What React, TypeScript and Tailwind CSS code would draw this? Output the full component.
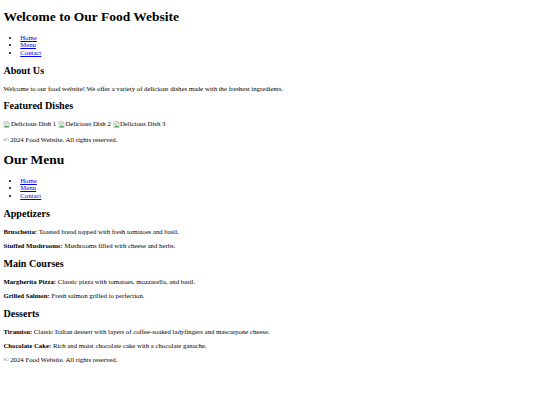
import React from "react";

function BrokenImg({ alt }: { alt: string }) {
  return (
    <span className="inline-flex items-baseline">
      <svg width="7" height="7" viewBox="0 0 16 16" className="mr-[0.5px] self-center">
        <path d="M2 1h8l4 4v10H2z" fill="#f2f2f2" stroke="#9a9a9a" strokeWidth="1" />
        <path d="M10 1v4h4" fill="none" stroke="#9a9a9a" strokeWidth="1" />
        <path d="M3 14l4-5 3 3 2-2 2 4z" fill="#4caf50" />
        <circle cx="6" cy="6" r="1.5" fill="#64a0dc" />
      </svg>
      <span>{alt}</span>
    </span>
  );
}

function Nav() {
  return (
    <ul className="my-[6.75px] list-disc pl-[16.875px] text-[6.75px] leading-[7.5px]">
      <li>
        <a href="#" className="text-[#0000ee] underline">Home</a>
      </li>
      <li>
        <a href="#" className="text-[#0000ee] underline">Menu</a>
      </li>
      <li>
        <a href="#" className="text-[#0000ee] underline">Contact</a>
      </li>
    </ul>
  );
}

const h1 = "my-[9.045px] text-[13.5px] font-bold leading-[15.6px]";
const h2 = "my-[8.4px] text-[10.125px] font-bold leading-[11.6px]";
const p = "my-[6.75px] text-[6.75px] leading-[7.5px]";

export default function App() {
  return (
    <div className="flow-root min-h-[405px] bg-white px-[3.375px] font-['Liberation_Serif','Times_New_Roman',serif] text-[6.75px] text-black leading-[7.5px]">
      <h1 className={h1}>Welcome to Our Food Website</h1>
      <Nav />
      <h2 className={h2}>About Us</h2>
      <p className={p}>
        Welcome to our food website! We offer a variety of delicious dishes made with the freshest ingredients.
      </p>
      <h2 className={h2}>Featured Dishes</h2>
      <div className="my-[6.75px] text-[6.75px] leading-[8.4px]">
        <BrokenImg alt="Delicious Dish 1" /> <BrokenImg alt="Delicious Dish 2" />{" "}
        <BrokenImg alt="Delicious Dish 3" />
      </div>
      <p className={p}>© 2024 Food Website. All rights reserved.</p>

      <h1 className={h1}>Our Menu</h1>
      <Nav />
      <h2 className={h2}>Appetizers</h2>
      <p className={p}>
        <strong>Bruschetta:</strong> Toasted bread topped with fresh tomatoes and basil.
      </p>
      <p className={p}>
        <strong>Stuffed Mushrooms:</strong> Mushrooms filled with cheese and herbs.
      </p>
      <h2 className={h2}>Main Courses</h2>
      <p className={p}>
        <strong>Margherita Pizza:</strong> Classic pizza with tomatoes, mozzarella, and basil.
      </p>
      <p className={p}>
        <strong>Grilled Salmon:</strong> Fresh salmon grilled to perfection.
      </p>
      <h2 className={h2}>Desserts</h2>
      <p className={p}>
        <strong>Tiramisu:</strong> Classic Italian dessert with layers of coffee-soaked ladyfingers and mascarpone cheese.
      </p>
      <p className={p}>
        <strong>Chocolate Cake:</strong> Rich and moist chocolate cake with a chocolate ganache.
      </p>
      <p className={p}>© 2024 Food Website. All rights reserved.</p>
    </div>
  );
}
